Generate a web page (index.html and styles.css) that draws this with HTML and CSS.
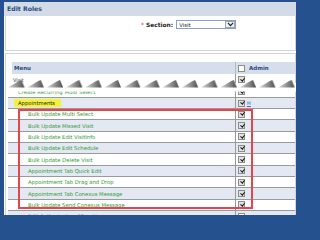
FILE: index.html
```html
<!DOCTYPE html>
<html>
<head>
<meta charset="utf-8">
<link rel="stylesheet" href="styles.css">
</head>
<body>
<div class="frame">
  <div class="panel">
    <div class="title">Edit Roles</div>
    <div class="section-box">
      <div class="section-row">
        <span class="req">*</span>
        <span class="lbl">Section:</span>
        <div class="select">
          <span class="sel-text">Visit</span>
          <span class="sel-btn"><svg width="7" height="5" viewBox="0 0 7 5"><path d="M1 1 L3.5 3.6 L6 1" fill="none" stroke="#222" stroke-width="1.1"/></svg></span>
        </div>
      </div>
    </div>
    <div class="grid-box">
      <div class="thead">
        <div class="c-menu">Menu</div>
        <div class="c-admin"><span class="cb"></span><span class="adm">Admin</span></div>
      </div>
      <div class="row visit">
        <div class="c-menu col">
          <span class="visit-lbl">Visit</span>
          <span class="g partial">Create Recurring Multi Select</span>
        </div>
        <div class="c-admin col">
          <span class="cb on"></span>
          <span class="cb on second"></span>
        </div>
        <svg class="tear" width="288" height="14" viewBox="0 0 288 14">
          <defs>
            <linearGradient id="fin" x1="0" x2="1" y1="0" y2="0">
              <stop offset="0" stop-color="#dcdcdc"/>
              <stop offset="0.8" stop-color="#6a6a6a"/>
              <stop offset="1" stop-color="#4a4a4a"/>
            </linearGradient>
            <pattern id="teeth" x="0" y="0" width="19.3" height="14" patternUnits="userSpaceOnUse">
              <rect x="0" y="4" width="19.3" height="8.6" fill="#fff"/>
              <polygon points="0,8.5 11,2 13.5,1 16.5,8.5" fill="url(#fin)"/>
            </pattern>
          </defs>
          <rect x="0" y="0" width="288" height="14" fill="url(#teeth)"/>
        </svg>
      </div>
      <div class="row alt appt">
        <div class="c-menu"><span class="hl">Appointments</span></div>
        <div class="c-admin"><span class="cb on"></span><a class="h">H</a></div>
      </div>
      <div class="row item">
        <div class="c-menu g">Bulk Update Multi Select</div>
        <div class="c-admin"><span class="cb on"></span></div>
      </div>
      <div class="row item alt">
        <div class="c-menu g">Bulk Update Missed Visit</div>
        <div class="c-admin"><span class="cb on"></span></div>
      </div>
      <div class="row item">
        <div class="c-menu g">Bulk Update Edit VisitInfo</div>
        <div class="c-admin"><span class="cb on"></span></div>
      </div>
      <div class="row item alt">
        <div class="c-menu g">Bulk Update Edit Schedule</div>
        <div class="c-admin"><span class="cb on"></span></div>
      </div>
      <div class="row item">
        <div class="c-menu g">Bulk Update Delete Visit</div>
        <div class="c-admin"><span class="cb on"></span></div>
      </div>
      <div class="row item alt">
        <div class="c-menu g">Appointment Tab Quick Edit</div>
        <div class="c-admin"><span class="cb on"></span></div>
      </div>
      <div class="row item">
        <div class="c-menu g">Appointment Tab Drag and Drop</div>
        <div class="c-admin"><span class="cb on"></span></div>
      </div>
      <div class="row item alt">
        <div class="c-menu g">Appointment Tab Conexus Message</div>
        <div class="c-admin"><span class="cb on"></span></div>
      </div>
      <div class="row item">
        <div class="c-menu g">Bulk Update Send Conexus Message</div>
        <div class="c-admin"><span class="cb on"></span></div>
      </div>
      <div class="row item alt">
        <div class="c-menu g">Edit Authorization Allocation</div>
        <div class="c-admin"><span class="cb"></span></div>
      </div>
    </div>
    <div class="redbox"></div>
  </div>
</div>
</body>
</html>
```
FILE: styles.css
```css
html, body {
  margin: 0;
  padding: 0;
}
body {
  background: #25528f;
  font-family: "DejaVu Sans", Verdana, sans-serif;
  color: #222;
}
.frame {
  width: 299px;
  height: 219px;
  box-sizing: border-box;
  padding: 2px 3px 4px 4px;
}
.panel {
  position: relative;
  height: 213px;
  overflow: hidden;
  background: #fff;
}
.title {
  height: 14px;
  line-height: 14px;
  padding-left: 3px;
  background: #d3dbe9;
  color: #2b4a7e;
  font-weight: bold;
  font-size: 6.2px;
}
.section-box {
  height: 35px;
  box-sizing: border-box;
  margin-left: 1px;
  padding-top: 4px;
  border: 1px solid #cfd4dd;
  border-top: 0;
}
.section-row {
  display: flex;
  align-items: center;
  height: 9px;
  padding-left: 135px;
}
.req {
  color: #e2302f;
  font-size: 6px;
  margin-right: 2px;
  line-height: 9px;
}
.lbl {
  font-weight: bold;
  font-size: 5.9px;
  color: #1e1e1e;
  margin-right: 3px;
}
.select {
  width: 60px;
  height: 9px;
  box-sizing: border-box;
  border: 1px solid #8aa2c2;
  display: flex;
  align-items: center;
  justify-content: space-between;
  background: #fff;
}
.sel-text {
  font-size: 5.3px;
  padding-left: 2px;
  color: #222;
}
.sel-btn {
  width: 10px;
  height: 7px;
  box-sizing: border-box;
  border: 1px solid #9aa4b2;
  display: flex;
  align-items: center;
  justify-content: center;
  background: #f4f4f4;
}
.sel-btn svg {
  display: block;
}
.grid-box {
  margin-top: 2px;
  margin-left: 1px;
  border: 1px solid #cfd4dd;
  border-bottom: 0;
  padding: 8px 0 0 2px;
}
.thead {
  display: flex;
  height: 12px;
  margin-left: 4px;
  background: #d6deeb;
  color: #2c4a7e;
  font-weight: bold;
  font-size: 5.5px;
}
.thead .c-menu {
  width: 223px;
  padding-left: 2px;
}
.thead .c-admin {
  border-left-color: #b5bdca;
}
.adm {
  margin-left: 4px;
}
.row {
  display: flex;
  box-sizing: border-box;
  border-bottom: 1px solid #9a9a9a;
  position: relative;
}
.alt {
  background: #e3e8f2;
}
.c-menu {
  width: 227px;
  flex: none;
  box-sizing: border-box;
  display: flex;
  align-items: center;
}
.c-admin {
  flex: 1;
  border-left: 1px solid #9a9a9a;
  padding-left: 2px;
  display: flex;
  align-items: center;
}
.col {
  flex-direction: column;
  align-items: flex-start;
}
.visit {
  height: 24px;
}
.visit .c-menu {
  padding-top: 3px;
}
.visit-lbl {
  font-size: 5px;
  padding-left: 5px;
  color: #333;
  line-height: 7px;
}
.partial {
  padding-left: 10px;
  margin-top: 4px;
  line-height: 8px;
}
.visit .c-admin {
  padding-top: 2px;
}
.cb.second {
  margin-top: 5px;
}
.tear {
  position: absolute;
  left: 0;
  top: 5px;
}
.appt {
  height: 11px;
}
.hl {
  margin-left: 6px;
  height: 8px;
  line-height: 8px;
  padding: 0 6px 0 4px;
  background: #f3f33c;
  font-size: 5.3px;
  color: #1a1a1a;
}
.item {
  height: 11.35px;
}
.g {
  color: #2d9a34;
  font-size: 5.3px;
}
.item .c-menu {
  padding-left: 20px;
}
.cb {
  display: inline-block;
  position: relative;
  width: 7px;
  height: 7px;
  box-sizing: border-box;
  border: 1px solid #8c8c8c;
  background: #fff;
  flex: none;
}
.cb.on {
  background: #e2e2e2;
}
.cb.on::after {
  content: "";
  position: absolute;
  left: 1.6px;
  top: -0.4px;
  width: 1.6px;
  height: 3.4px;
  border: solid #111;
  border-width: 0 1.2px 1.2px 0;
  transform: rotate(40deg);
}
.h {
  margin-left: 2px;
  font-size: 5px;
  color: #3c5db0;
  text-decoration: underline;
}
.redbox {
  position: absolute;
  left: 14px;
  top: 107px;
  width: 235px;
  height: 100px;
  box-sizing: border-box;
  border: 2px solid #e4464b;
}
```
